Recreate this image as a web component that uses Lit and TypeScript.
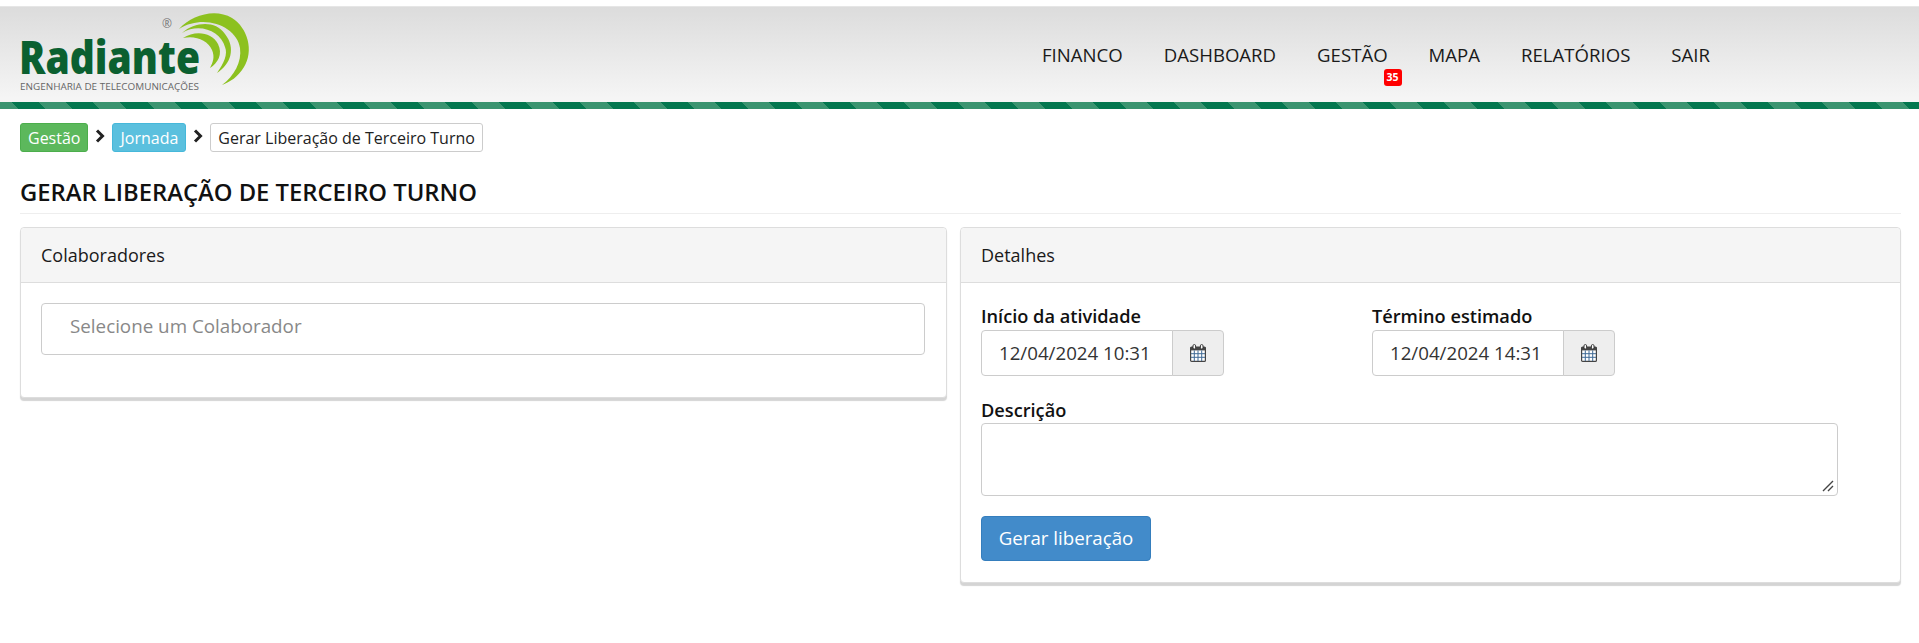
import { LitElement, html, css, svg } from "lit";
import { customElement } from "lit/decorators.js";

const calendar = svg`<svg class="cal" viewBox="0 0 16 18" width="16" height="18" aria-hidden="true">
  <rect x=".6" y="3" width="14.8" height="14.4" rx="1" fill="#fff" stroke="#444" stroke-width="1.2"/>
  <rect x=".6" y="3" width="14.8" height="3.4" fill="#444"/>
  <rect x="3" y=".6" width="2.6" height="4.4" rx="1.2" fill="#fff" stroke="#333" stroke-width="1"/>
  <rect x="10.4" y=".6" width="2.6" height="4.4" rx="1.2" fill="#fff" stroke="#333" stroke-width="1"/>
  <path d="M4.3 6.4v10.6M8 6.4v10.6M11.7 6.4v10.6M1 9.7h14M1 13.3h14" stroke="#3f6a96" stroke-width="1" fill="none"/>
</svg>`;

const chevron = html`<svg class="chev" viewBox="0 0 10 14" width="10" height="14" aria-hidden="true"><path d="M2 1.5 7.5 7 2 12.5" fill="none" stroke="#222" stroke-width="3"/></svg>`;

const logo = svg`<svg class="logo" viewBox="0 0 260 95" width="260" height="95" role="img" aria-label="Radiante">
  <path d="M179 22C192 8 215 1 232 11C248 21 254 44 244 60C238 70 230 75 222 78C234 69 242 55 240 41C237 20 205 6 179 22Z" fill="#8cc11f"/>
  <path d="M182 26C195 15 215 13 225 27C236 41 231 57 217 66C224 56 228 47 225 40C221 25 200 15 182 26Z" fill="#8cc11f"/>
  <path d="M183 31C195 23 212 25 218 37C223 47 218 56 210 61C213 55 215 50 212 43C208 33 195 28 183 31Z" fill="#8cc11f"/>
  <text x="162" y="21" class="lg-r">®</text>
  <text x="19" y="67" class="lg-name" textLength="181" lengthAdjust="spacingAndGlyphs">Radiante</text>
  <text x="20" y="83" class="lg-sub" textLength="179" lengthAdjust="spacingAndGlyphs">ENGENHARIA DE TELECOMUNICAÇÕES</text>
</svg>`;

@customElement("app-root")
export class AppRoot extends LitElement {
  static styles = css`
    :host { display: block; font-family: "Open Sans", sans-serif; color: #222; background: #fff; min-height: 643px; font-size: 16px; }
    * { box-sizing: border-box; }
    .top-gap { height: 6px; }
    header { height: 96px; background: linear-gradient(#dcdcdc, #f6f6f6); display: flex; align-items: flex-start; border-top: 1px solid #e6e6e6; }
    .logo { display: block; flex: none; }
    .lg-name { font: 800 46px "Open Sans", sans-serif; fill: #0b6030; }
    .lg-sub { font: 400 9.6px "Open Sans", sans-serif; fill: #666; }
    .lg-r { font: 400 12px "Open Sans", sans-serif; fill: #777; }
    nav { display: flex; margin-left: 782px; gap: 41px; padding-top: 36px; }
    nav a { position: relative; font-size: 18.6px; line-height: 24px; color: #1a1a1a; white-space: nowrap; }
    .badge { position: absolute; right: -14px; top: 26px; width: 18px; height: 17px; border-radius: 3px; background: #f00; color: #fff; font-size: 10.5px; font-weight: 700; line-height: 17px; text-align: center; }
    .stripe { height: 7px; background: repeating-linear-gradient(45deg, #3b9470 0 13.4px, #04774f 13.4px 32.5px, #3b9470 32.5px 38.2px); }
    main { padding: 14px 18px 0 20px; }
    .crumbs { display: flex; align-items: center; height: 29px; font-size: 16px; }
    .crumb { height: 29px; line-height: 28px; padding: 0 7px; border-radius: 3px; border: 1px solid; white-space: nowrap; }
    .green { background: #5cb85c; border-color: #4cae4c; color: #fff; }
    .blue { background: #5bc0de; border-color: #46b8da; color: #fff; }
    .plain { background: #fff; border-color: #ccc; color: #222; }
    .chev { margin: -4px 7px 0 7px; flex: none; }
    h1 { margin: 18px 0 0; padding-top: 7px; font-size: 23.8px; line-height: 30px; font-weight: 550; color: #111; border-bottom: 1px solid #eee; height: 44px; }
    .cols { display: grid; grid-template-columns: 927px 941px; gap: 13px; margin-top: 13px; align-items: start; }
    .panel { border: 1px solid #ddd; border-radius: 4px; box-shadow: 0 3px 1px #d4d4d4; background: #fff; }
    .head { height: 55px; padding: 0 20px; background: #f5f5f5; border-bottom: 1px solid #ddd; line-height: 54px; font-size: 18px; border-radius: 4px 4px 0 0; color: #1a1a1a; }
    .body-l { padding: 20px 21px 42px 20px; }
    .select { height: 52px; border: 1px solid #ccc; border-radius: 4px; line-height: 44px; padding-left: 28px; color: #888; font-size: 18.8px; }
    .body-r { padding: 20px 20px 21px; }
    .row { display: grid; grid-template-columns: 391px 1fr; }
    label { display: block; font-size: 18.2px; font-weight: 550; line-height: 26px; color: #111; }
    .group { display: flex; width: 243px; height: 46px; margin-top: 1px; }
    .input { flex: 1; border: 1px solid #ccc; border-radius: 4px 0 0 4px; line-height: 44px; padding-left: 17px; font-size: 18.7px; color: #333; }
    .addon { width: 52px; flex: none; background: #eee; border: 1px solid #ccc; border-radius: 0 4px 4px 0; margin-left: -1px; display: flex; align-items: center; justify-content: center; }
    .desc { margin-top: 21px; }
    .area { position: relative; width: 857px; height: 73px; border: 1px solid #ccc; border-radius: 4px; }
    .grip { position: absolute; right: 2px; bottom: 2px; display: block; }
    button { display: block; margin-top: 20px; width: 170px; height: 45px; padding: 0 0 2px; background: #428bca; border: 1px solid #357ebd; border-radius: 4px; color: #fff; font: 400 18.7px "Open Sans", sans-serif; }
  `;

  render() {
    return html`
      <div class="top-gap"></div>
      <header>
        ${logo}
        <nav>
          <a>FINANCO</a><a>DASHBOARD</a><a>GESTÃO<span class="badge">35</span></a><a>MAPA</a><a>RELATÓRIOS</a><a>SAIR</a>
        </nav>
      </header>
      <div class="stripe"></div>
      <main>
        <div class="crumbs">
          <span class="crumb green">Gestão</span>${chevron}<span class="crumb blue">Jornada</span>${chevron}<span class="crumb plain">Gerar Liberação de Terceiro Turno</span>
        </div>
        <h1>GERAR LIBERAÇÃO DE TERCEIRO TURNO</h1>
        <div class="cols">
          <section class="panel">
            <div class="head">Colaboradores</div>
            <div class="body-l"><div class="select">Selecione um Colaborador</div></div>
          </section>
          <section class="panel">
            <div class="head">Detalhes</div>
            <div class="body-r">
              <div class="row">
                <div><label>Início da atividade</label><div class="group"><div class="input">12/04/2024 10:31</div><div class="addon">${calendar}</div></div></div>
                <div><label>Término estimado</label><div class="group"><div class="input">12/04/2024 14:31</div><div class="addon">${calendar}</div></div></div>
              </div>
              <label class="desc">Descrição</label>
              <div class="area"><svg class="grip" width="14" height="14" viewBox="0 0 14 14"><path d="M2 12 12 2M7 12l5-5" stroke="#444" stroke-width="1.4" fill="none"/></svg></div>
              <button>Gerar liberação</button>
            </div>
          </section>
        </div>
      </main>
    `;
  }
}
